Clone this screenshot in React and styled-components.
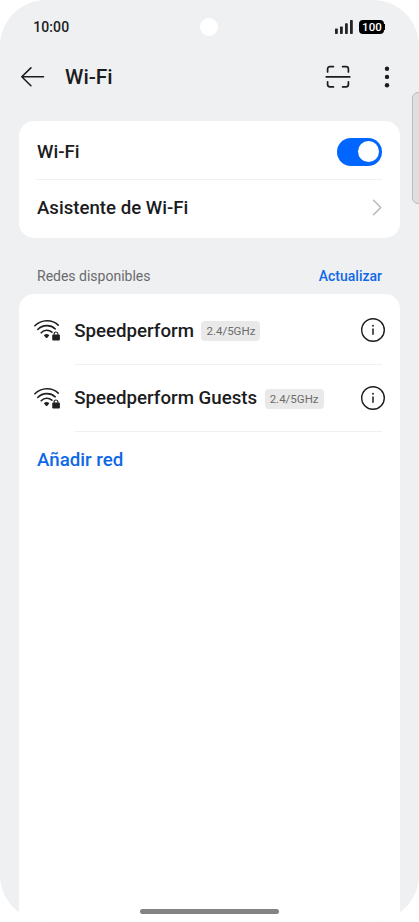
import React, { useState } from "react";
import styled, { createGlobalStyle } from "styled-components";

const networks = [
  { name: "Speedperform", band: "2.4/5GHz" },
  { name: "Speedperform Guests", band: "2.4/5GHz" },
];

export default function App() {
  const [enabled, setEnabled] = useState(true);

  return (
    <>
      <GlobalStyle />
      <Phone>
        <StatusBar>
          <Time>10:00</Time>
          <Camera />
          <StatusIcons>
            <SignalIcon />
            <Battery>
              <Charge>100</Charge>
              <BatteryTip />
            </Battery>
          </StatusIcons>
        </StatusBar>

        <Header>
          <BackIcon />
          <Title>Wi-Fi</Title>
          <ScanIcon />
          <MoreIcon />
        </Header>

        <Card>
          <Row $first>
            <Label>Wi-Fi</Label>
            <Toggle
              role="switch"
              aria-checked={enabled}
              $on={enabled}
              onClick={() => setEnabled(!enabled)}
            >
              <Knob />
            </Toggle>
          </Row>
          <Divider />
          <Row>
            <Label>Asistente de Wi-Fi</Label>
            <ChevronIcon />
          </Row>
        </Card>

        <SectionHeader>
          <span>Redes disponibles</span>
          <Refresh>Actualizar</Refresh>
        </SectionHeader>

        <NetworkCard>
          {networks.map((network) => (
            <React.Fragment key={network.name}>
              <Network>
                <WifiLockIcon />
                <NetworkName>{network.name}</NetworkName>
                <Band>{network.band}</Band>
                <InfoIcon />
              </Network>
              <Divider $inset />
            </React.Fragment>
          ))}
          <AddNetwork>Añadir red</AddNetwork>
        </NetworkCard>

        <ScrollThumb />
        <HomeBar />
      </Phone>
    </>
  );
}

function SignalIcon() {
  return (
    <svg width="18" height="14" viewBox="0 0 18 14" fill="#222426">
      <rect x="0" y="8.6" width="2.8" height="5.4" rx="0.7" />
      <rect x="5" y="6.5" width="2.8" height="7.5" rx="0.7" />
      <rect x="10" y="3.3" width="2.8" height="10.7" rx="0.7" />
      <rect x="15" y="0" width="2.8" height="14" rx="0.7" />
    </svg>
  );
}

function BackIcon() {
  return (
    <svg
      width="24"
      height="20"
      viewBox="0 0 24 20"
      fill="none"
      stroke="#1b1c1e"
      strokeWidth="1.6"
      strokeLinecap="round"
      strokeLinejoin="round"
    >
      <path d="M22.5 9.8H0.8M9.9 0.9L0.8 9.8L9.9 18.7" />
    </svg>
  );
}

function ScanIcon() {
  return (
    <svg
      width="26"
      height="24"
      viewBox="0 0 26 24"
      fill="none"
      stroke="#1b1c1e"
      strokeWidth="1.7"
      strokeLinecap="round"
    >
      <path d="M2.6 6.9V4Q2.6 1.7 4.9 1.7H8.4" />
      <path d="M17.6 1.7H21.1Q23.4 1.7 23.4 4V6.9" />
      <path d="M2.6 16.8V19.6Q2.6 21.9 4.9 21.9H8.4" />
      <path d="M17.6 21.9H21.1Q23.4 21.9 23.4 19.6V16.8" />
      <path d="M1.2 11.8H24.8" />
    </svg>
  );
}

function MoreIcon() {
  return (
    <MoreSvg width="6" height="22" viewBox="0 0 6 22" fill="#1b1c1e">
      <circle cx="3" cy="2.7" r="2.2" />
      <circle cx="3" cy="10.9" r="2.2" />
      <circle cx="3" cy="19.2" r="2.2" />
    </MoreSvg>
  );
}

function ChevronIcon() {
  return (
    <svg
      width="10"
      height="18"
      viewBox="0 0 10 18"
      fill="none"
      stroke="#b9b9b9"
      strokeWidth="1.5"
      strokeLinecap="round"
      strokeLinejoin="round"
    >
      <path d="M1.5 1.2L8.8 8.5L1.5 15.8" />
    </svg>
  );
}

function WifiLockIcon() {
  return (
    <svg width="27" height="22" viewBox="0 0 27 22" fill="none">
      <g stroke="#1f2022" strokeWidth="1.6" strokeLinecap="round">
        <path d="M0.9 6.8C7.4 0.2 18.2 0.2 24.2 6.1" />
        <path d="M3.8 10.5C8.8 5.5 16.6 5.5 21.2 9.8" />
        <path d="M7.2 13.8C10.4 10.6 14.8 10.6 17.9 13.2" />
      </g>
      <path
        d="M10.1 15.9Q12.6 14.3 15.1 15.9Q15.4 16.4 15 16.8L13.1 18.9Q12.6 19.3 12.1 18.9L10.2 16.8Q9.8 16.4 10.1 15.9Z"
        fill="#1f2022"
      />
      <rect x="18.2" y="15.6" width="7.7" height="5.8" rx="0.9" fill="#1f2022" />
      <path d="M20.1 15.8V14.9A1.9 1.9 0 0 1 23.9 14.9V15.8" stroke="#1f2022" strokeWidth="1.2" />
    </svg>
  );
}

function InfoIcon() {
  return (
    <InfoSvg width="26" height="26" viewBox="0 0 26 26" fill="none">
      <circle cx="13" cy="13" r="11.3" stroke="#1b1c1e" strokeWidth="1.4" />
      <circle cx="13" cy="8.8" r="0.95" fill="#1b1c1e" />
      <path d="M13 12V17.3" stroke="#1b1c1e" strokeWidth="1.5" strokeLinecap="round" />
    </InfoSvg>
  );
}

const GlobalStyle = createGlobalStyle`
  * {
    box-sizing: border-box;
  }

  body {
    margin: 0;
    background: #fff;
    font-family: Roboto, sans-serif;
    font-weight: 500;
    color: #1b1c1e;
  }

  svg {
    flex-shrink: 0;
  }
`;

const Phone = styled.div`
  position: relative;
  display: flex;
  flex-direction: column;
  width: 419px;
  height: 921px;
  padding: 0 19px;
  border-radius: 46px;
  background: #eff0f2;
  overflow: hidden;
`;

const StatusBar = styled.div`
  display: grid;
  grid-template-columns: 1fr auto 1fr;
  align-items: center;
  height: 54px;
  padding: 0 14.6px 0 14.2px;
`;

const Time = styled.span`
  font-size: 14px;
  letter-spacing: 0.1px;
`;

const Camera = styled.div`
  width: 18px;
  height: 18px;
  margin-right: 1px;
  border-radius: 50%;
  background: #fff;
`;

const StatusIcons = styled.div`
  display: flex;
  justify-content: flex-end;
  align-items: center;
  gap: 6px;
`;

const Battery = styled.div`
  display: flex;
  align-items: center;
`;

const Charge = styled.span`
  width: 25px;
  height: 14px;
  border-radius: 4px;
  background: #000;
  color: #fff;
  font-size: 11.5px;
  line-height: 15px;
  text-align: center;
`;

const BatteryTip = styled.span`
  width: 1px;
  height: 6px;
  background: #000;
`;

const Header = styled.div`
  display: flex;
  align-items: center;
  height: 46px;
  padding: 0 10.5px 0 2px;
`;

const Title = styled.h1`
  flex: 1;
  margin: 0 0 0 20px;
  font-size: 20.9px;
  line-height: 24px;
  font-weight: 500;
`;

const MoreSvg = styled.svg`
  margin-left: 33px;
`;

const Card = styled.div`
  margin-top: 21px;
  padding: 0 18px;
  border-radius: 15px;
  background: #fff;
`;

const Row = styled.div`
  display: flex;
  justify-content: space-between;
  align-items: center;
  height: 58px;
  padding: ${(props) => (props.$first ? "3px 0 0" : "0 0 2px")};
`;

const Label = styled.span`
  font-size: 18.65px;
  line-height: 22px;
`;

const Toggle = styled.button`
  display: flex;
  justify-content: ${(props) => (props.$on ? "flex-end" : "flex-start")};
  align-items: center;
  width: 45px;
  height: 28px;
  padding: 0 3.5px;
  border: 0;
  border-radius: 14px;
  background: ${(props) => (props.$on ? "#0066ff" : "#d5d6d8")};
`;

const Knob = styled.span`
  width: 21px;
  height: 21px;
  border-radius: 50%;
  background: #fff;
`;

const Divider = styled.div`
  height: 1px;
  margin-left: ${(props) => (props.$inset ? "38px" : "0")};
  background: #f0f0f0;
`;

const SectionHeader = styled.div`
  display: flex;
  justify-content: space-between;
  align-items: center;
  height: 56px;
  padding: 20px 18px 0;
  font-size: 14px;
  font-weight: 400;
  color: #6a6b6d;
`;

const Refresh = styled.span`
  font-weight: 500;
  color: #0f68e6;
`;

const NetworkCard = styled.div`
  flex: 1;
  padding: 3px 18px 0;
  border-radius: 15px 15px 0 0;
  background: #fff;
`;

const Network = styled.div`
  display: flex;
  align-items: center;
  height: 66.5px;
  margin: 0 -3.5px;
`;

const NetworkName = styled.span`
  margin: 1px 0 0 13.7px;
  font-size: 18.7px;
  line-height: 22px;
`;

const Band = styled.span`
  margin: 2px 0 0 7.5px;
  height: 20px;
  padding: 0 5px;
  border-radius: 4px;
  background: #e9e9e9;
  color: #6c6c6c;
  font-size: 11.5px;
  font-weight: 400;
  line-height: 21px;
`;

const InfoSvg = styled.svg`
  margin-left: auto;
`;

const AddNetwork = styled.div`
  padding-top: 17px;
  font-size: 18.7px;
  line-height: 23px;
  color: #0f68e6;
`;

const ScrollThumb = styled.div`
  position: absolute;
  top: 92px;
  right: -6px;
  width: 13px;
  height: 112px;
  border: 1px solid #bdbdbd;
  border-radius: 6px;
  background: #dfdfdf;
`;

const HomeBar = styled.div`
  position: absolute;
  left: 140px;
  bottom: 7px;
  width: 139px;
  height: 5px;
  border-radius: 3px;
  background: #838383;
`;
